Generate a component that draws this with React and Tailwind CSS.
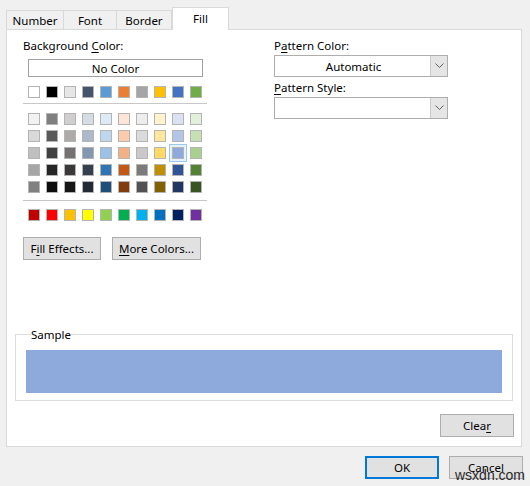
import React from 'react';

// ── Palette data ─────────────────────────────────────────────
const THEME = ['#FFFFFF', '#000000', '#E7E6E6', '#44546A', '#5B9BD5', '#ED7D31', '#A5A5A5', '#FFC000', '#4472C4', '#70AD47'];

const SHADES = [
  ['#F2F2F2', '#7F7F7F', '#D0CECE', '#D6DCE4', '#DDEBF7', '#FCE4D6', '#EDEDED', '#FFF2CC', '#D9E1F2', '#E2EFDA'],
  ['#D9D9D9', '#595959', '#AEAAAA', '#ACB9CA', '#BDD7EE', '#F8CBAD', '#DBDBDB', '#FFE699', '#B4C6E7', '#C6E0B4'],
  ['#BFBFBF', '#404040', '#757171', '#8497B0', '#9BC2E6', '#F4B084', '#C9C9C9', '#FFD966', '#8EA9DB', '#A9D08E'],
  ['#A6A6A6', '#262626', '#3A3838', '#333F4F', '#2F75B5', '#C65911', '#7B7B7B', '#BF8F00', '#305496', '#548235'],
  ['#808080', '#0D0D0D', '#161616', '#222B35', '#1F4E78', '#833C0C', '#525252', '#806000', '#203764', '#375623'],
];

const STANDARD = ['#C00000', '#FF0000', '#FFC000', '#FFFF00', '#92D050', '#00B050', '#00B0F0', '#0070C0', '#002060', '#7030A0'];

const TABS = ['Number', 'Font', 'Border', 'Fill'];

// ── Bits ─────────────────────────────────────────────────────
function SwatchRow({ colors, selectedIndex = -1 }) {
  return (
    <div className="flex gap-[6px] ml-[5px]">
      {colors.map((c, i) => (
        <div key={i} className={i === selectedIndex ? 'relative' : ''}>
          {i === selectedIndex && (
            <div className="absolute -left-[3px] -top-[3px] w-[18px] h-[18px] border border-[#99c9ef] bg-[#e5f1fb]" />
          )}
          <div className="relative w-[12px] h-[12px] border border-[#b4b4b4]" style={{ backgroundColor: c }} />
        </div>
      ))}
    </div>
  );
}

function Btn({ children, className = '' }) {
  return (
    <div className={`h-[23px] flex items-center justify-center bg-[#e1e1e1] border border-[#adadad] text-[#000] ${className}`}>
      {children}
    </div>
  );
}

function Combo({ value }) {
  return (
    <div className="w-[174px] h-[22px] border border-[#adadad] bg-white flex items-center">
      <span className="flex-1 text-center pl-[2px]">{value}</span>
      <div className="w-[17px] h-[20px] bg-[#e5e5e5] border-l border-[#cccccc] flex items-center justify-center">
        <svg width="9" height="6" viewBox="0 0 9 6" fill="none" stroke="#606060" strokeWidth="1">
          <path d="M0.5 0.5 L4.5 4.5 L8.5 0.5" />
        </svg>
      </div>
    </div>
  );
}

const U = ({ children }) => <span className="underline underline-offset-2">{children}</span>;

// ── Main ─────────────────────────────────────────────────────
export default function App() {
  return (
    <div
      className="relative w-[530px] h-[486px] bg-[#f0f0f0] overflow-hidden text-[11.5px] leading-[15px] text-black"
      style={{ fontFamily: '"Segoe UI", "Noto Sans", Arial, sans-serif' }}
    >
      {/* Tabs */}
      <div className="flex items-end h-[29px] pl-[6px]">
        {TABS.map(t => (
          t === 'Fill' ? (
            <div key={t} className="relative z-10 w-[57px] h-[23px] -mb-[1px] bg-white border border-b-0 border-[#d9d9d9] flex items-center justify-center pb-[2px]">
              {t}
            </div>
          ) : (
            <div key={t} className={`h-[19px] bg-[#f0f0f0] border border-b-0 border-[#d9d9d9] flex items-center justify-center ${t === 'Number' ? 'w-[58px]' : t === 'Font' ? 'w-[53px] border-l-0' : 'w-[55px] border-l-0'}`}>
              {t}
            </div>
          )
        ))}
      </div>

      {/* Panel */}
      <div className="ml-[6px] w-[516px] h-[418px] bg-white border border-[#d9d9d9] flex flex-col">
        <div className="flex pl-[16px] pt-[8px]">
          {/* Left column */}
          <div className="w-[184px]">
            <div>Background <U>C</U>olor:</div>
            <div className="mt-[6px] ml-[5px] w-[175px] h-[18px] border border-[#a0a0a0] flex items-center justify-center">
              No Color
            </div>
            <div className="mt-[9px]">
              <SwatchRow colors={THEME} />
            </div>
            <div className="mt-[5px] h-px bg-[#c8c8c8]" />
            <div className="mt-[9px] flex flex-col gap-[5px]">
              {SHADES.map((row, i) => (
                <SwatchRow key={i} colors={row} selectedIndex={i === 2 ? 8 : -1} />
              ))}
            </div>
            <div className="mt-[7px] h-px bg-[#c8c8c8]" />
            <div className="mt-[8px]">
              <SwatchRow colors={STANDARD} />
            </div>
            <div className="mt-[16px] flex gap-[11px]">
              <Btn className="w-[78px]">F<U>i</U>ll Effects...</Btn>
              <Btn className="w-[89px]"><U>M</U>ore Colors...</Btn>
            </div>
          </div>

          {/* Right column */}
          <div className="ml-[67px] w-[174px]">
            <div>P<U>a</U>ttern Color:</div>
            <div className="mt-[2px]">
              <Combo value="Automatic" />
            </div>
            <div className="mt-[3px]"><U>P</U>attern Style:</div>
            <div className="mt-[2px]">
              <Combo value="" />
            </div>
          </div>
        </div>

        {/* Sample */}
        <fieldset className="mt-[68px] ml-[8px] w-[497px] border border-[#dcdcdc] px-[10px] pb-[7px]">
          <legend className="ml-[5px] px-0 leading-[13px]">Sample</legend>
          <div className="mt-[9px] w-[476px] h-[43px] bg-[#8EA9DB]" />
        </fieldset>

        <div className="flex justify-end pr-[7px] mt-[13px]">
          <Btn className="w-[74px]">Clea<U>r</U></Btn>
        </div>
      </div>

      {/* Bottom buttons */}
      <div className="flex justify-end gap-[10px] pr-[7px] mt-[9px]">
        <div className="w-[74px] h-[23px] flex items-center justify-center bg-[#e1e1e1] border-2 border-[#0078d7]">OK</div>
        <Btn className="w-[74px]">Cancel</Btn>
      </div>

      {/* Watermark */}
      <div
        className="absolute left-[455px] top-[467px] text-[14px] leading-[16px] text-[#2a2a2a]"
        style={{ fontFamily: '"Liberation Sans", Arial, sans-serif' }}
      >
        wsxdn.com
      </div>
    </div>
  );
}
